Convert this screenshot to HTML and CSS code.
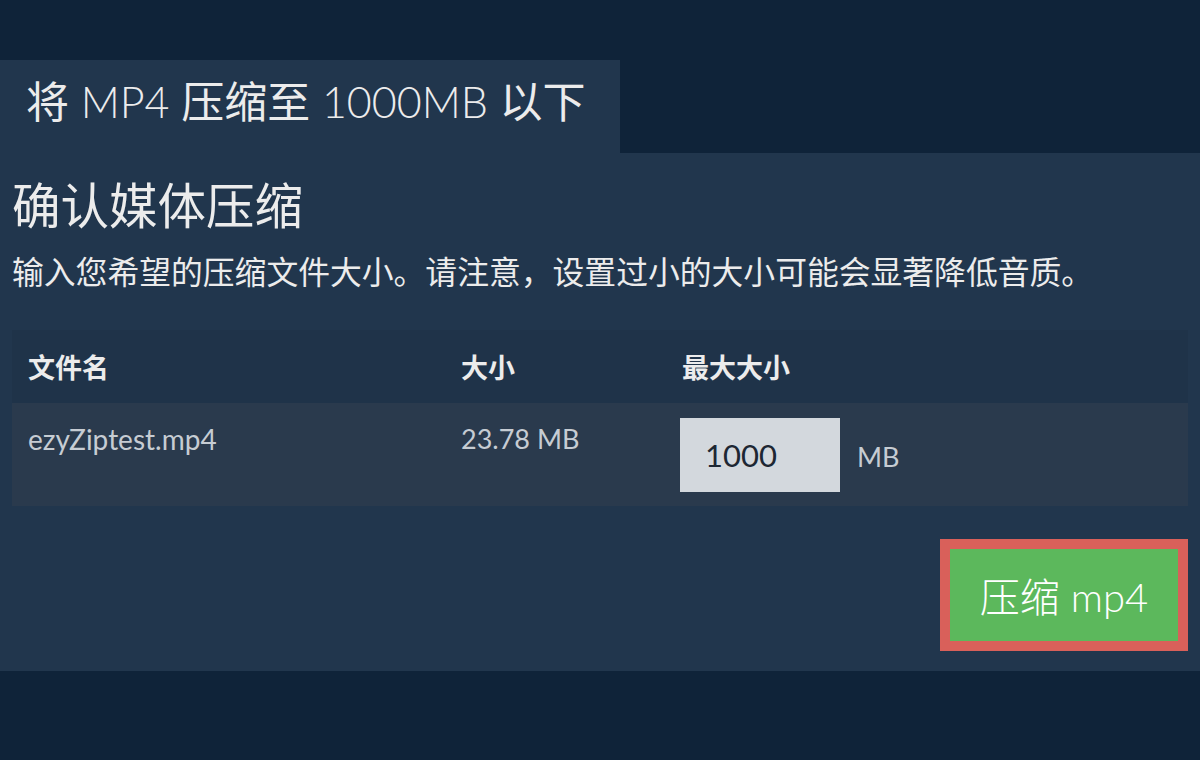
FILE: index.html
```html
<!DOCTYPE html>
<html lang="zh-CN">
<head>
<meta charset="utf-8">
<title>将 MP4 压缩至 1000MB 以下</title>
<link rel="stylesheet" href="styles.css">
</head>
<body>
<div class="page">
  <div class="tab"><h1 class="tab-title"><span class="cjk">将</span> MP4 <span class="cjk">压缩至</span> 1000MB <span class="cjk">以下</span></h1></div>
  <section class="panel">
    <h2 class="heading">确认媒体压缩</h2>
    <p class="desc">输入您希望的压缩文件大小。请注意，设置过小的大小可能会显著降低音质。</p>
    <table class="files">
      <colgroup>
        <col class="c-name">
        <col class="c-size">
        <col class="c-max">
      </colgroup>
      <thead>
        <tr class="head-row">
          <th>文件名</th>
          <th>大小</th>
          <th>最大大小</th>
        </tr>
      </thead>
      <tbody>
        <tr class="body-row">
          <td class="fname">ezyZiptest.mp4</td>
          <td>23.78 MB</td>
          <td>
            <div class="max-cell">
              <input class="max-input" type="text" value="1000">
              <span class="unit">MB</span>
            </div>
          </td>
        </tr>
      </tbody>
    </table>
    <div class="actions">
      <button class="compress-btn" type="button">压缩 mp4</button>
    </div>
  </section>
</div>
</body>
</html>
```

FILE: styles.css
```css
* { box-sizing: border-box; }

html, body {
  margin: 0;
  padding: 0;
  background: #0f2339;
  font-family: Lato, "Noto Sans CJK SC", sans-serif;
  color: #ececec;
}

.page {
  width: 1200px;
  height: 760px;
  padding-top: 60px;
}

.tab {
  width: 620px;
  height: 93px;
  background: #21364d;
  display: flex;
  align-items: center;
  padding: 0 26px 10px;
}

.tab-title {
  margin: 0;
  font-size: 43px;
  font-weight: 300;
  line-height: 1;
  color: #ececec;
  white-space: nowrap;
}

.tab-title .cjk {
  font-weight: 400;
}

.panel {
  background: #21364d;
  padding: 23px 12px 20px;
}

.heading {
  margin: 0;
  font-size: 48.5px;
  font-weight: 400;
  line-height: 58px;
  color: #ececec;
}

.desc {
  margin: 14px 0 0;
  font-size: 31.8px;
  line-height: 48px;
  color: #ececec;
  white-space: nowrap;
}

.files {
  margin-top: 34px;
  width: 100%;
  border-collapse: collapse;
  table-layout: fixed;
}

.c-name { width: 433px; }
.c-size { width: 221px; }

.head-row {
  background: #1f3349;
}

.head-row th {
  text-align: left;
  font-size: 27px;
  font-weight: 700;
  line-height: 41px;
  padding: 17px 16px 15px;
  color: #ececec;
}

.body-row {
  background: #2a3a4d;
}

.body-row td {
  vertical-align: top;
  font-size: 27px;
  line-height: 42px;
  padding: 15px 16px 14px;
  color: #c6ccd3;
}

.body-row td.fname {
  font-size: 28px;
}

.max-cell {
  display: flex;
  align-items: center;
  gap: 17px;
  margin-left: -2px;
}

.max-input {
  width: 160px;
  height: 74px;
  border: none;
  background: #d3d8dd;
  color: #1d2733;
  font-family: Lato, sans-serif;
  font-size: 31px;
  padding: 0 0 0 25px;
  outline: none;
}

.unit {
  font-size: 27px;
  color: #c6ccd3;
  padding-top: 4px;
}

.actions {
  display: flex;
  justify-content: flex-end;
  margin-top: 33px;
}

.compress-btn {
  width: 248px;
  height: 112px;
  background: #5cb85c;
  border: 10px solid #d9605a;
  color: #ffffff;
  font-family: Lato, "Noto Sans CJK SC", sans-serif;
  font-size: 40px;
  font-weight: 300;
  padding: 0;
  cursor: pointer;
}
```
